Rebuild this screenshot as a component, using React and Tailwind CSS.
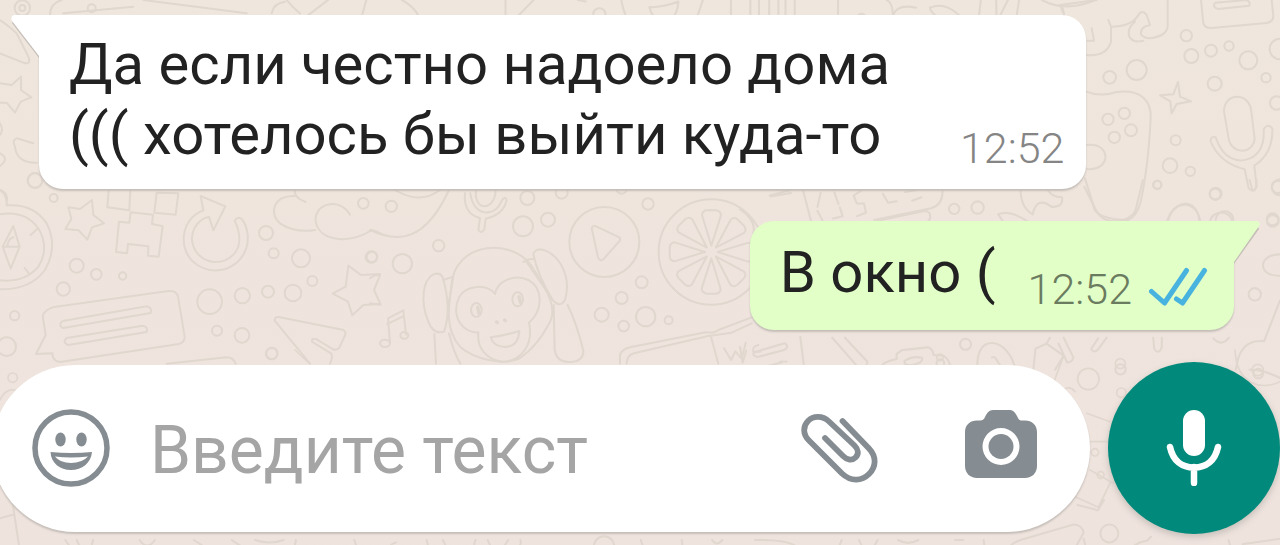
import React from "react";

function Dots({ items }) {
  return items.map(([x, y, r]) => <circle key={`${x}-${y}`} cx={x} cy={y} r={r} />);
}

function Wallpaper() {
  return (
    <svg
      aria-hidden="true"
      viewBox="0 0 1280 545"
      preserveAspectRatio="xMidYMid slice"
      className="pointer-events-none absolute inset-0 size-full fill-none stroke-[#e0d7cf] [stroke-linecap:round] [stroke-linejoin:round]"
    >
      {/* left: compass, puzzle, reload arrow, speech card */}
      <g transform="translate(0 180) scale(.33333)" strokeWidth="6">
        <path d="M0 30Q22 45 20 76Q100 70 140 130Q175 200 135 270Q90 330 0 328M0 103Q75 90 115 145Q150 205 115 260Q75 308 0 301M40 138L59 200L32 266L8 200ZM8 200H59M22 198Q25 175 40 172M92 165L112 146M74 264L88 282" />
        <path d="M205 82L240 87L276 60L280 105L312 130L276 142L262 179L236 151L196 147L214 117Z" />
        <path d="M326 30L322 82L388 91L391 30M470 38L463 98L527 104L535 40ZM392 97L459 104L456 132L488 139L476 230L444 227L445 199L384 192L381 220L348 216L357 125L388 128Z" />
        <path d="M610 91C540 116 530 215 592 255C665 300 750 245 743 165Q740 135 725 117Q713 108 704 122C735 190 710 225 675 241C610 265 555 200 584 143Q600 115 627 110L640 151L676 79L602 48Z" />
        <path d="M885 30Q880 52 917 66M885 48C820 45 805 100 840 130Q885 160 946 150M1050 104C1020 50 940 70 947 125C960 190 1060 190 1115 150Q1130 152 1145 162" />
        <path d="M140 392Q150 382 168 380L500 334Q529 328 534 350L554 470Q554 487 537 492L180 546Q158 545 157 520L108 522L137 465L129 414Q127 400 140 392ZM188 423L440 379Q457 382 452 399L190 444Q172 437 188 423ZM200 474L428 437Q445 440 440 456L205 495Q185 488 200 474Z" />
        <path d="M500 551L680 532Q700 532 707 551M930 551L824 422Q824 410 836 411L1028 449Q1040 455 1035 466L1018 503Q1010 513 998 507L950 478Q932 473 937 486L993 520Q1000 530 990 551" />
        <path d="M1045 257L1083 285L1140 282M1045 257L1037 320L998 341L1044 365L1057 406L1090 375L1140 372" />
        <Dots items={[[105,2,22],[161,54,12],[230,257,21],[289,283,16],[368,288,11],[190,327,20],[44,407,14],[20,500,28],[798,159,21],[821,220,15],[903,235,27],[937,303,15],[879,339,25],[804,335,18],[727,347,23],[629,365,37],[651,452,15],[726,466,22],[815,521,17],[1090,70,16],[1114,231,17]]} />
      </g>

      {/* centre: monkey, microphone, play, citrus slice, book */}
      <g transform="translate(370 180) scale(.33333)" strokeWidth="6">
        <path d="M0 150C85 190 165 185 237 30M75 30Q150 75 210 30M0 295Q15 282 30 286L12 330L32 374L0 370" />
        <path d="M285 40C280 85 302 108 330 114L325 150Q334 163 343 148L347 116Q400 105 410 60Q405 45 395 62C375 115 310 110 301 40M318 30C310 95 375 95 377 30" />
        <path d="M60 488L54 415L100 391L108 464M52 432L98 410" />
        <ellipse cx="45" cy="490" rx="15" ry="11" /><ellipse cx="103" cy="466" rx="12" ry="10" />
        <path d="M244 320C250 180 440 170 492 270C535 335 565 390 535 435Q500 500 450 534C400 560 310 535 270 500C225 450 235 380 244 320Z" />
        <path d="M375 342C350 310 290 315 268 350C240 410 280 460 325 457C320 505 350 540 400 546C460 540 490 490 477 428C520 390 520 325 475 300C430 280 380 305 375 342Z" />
        <path d="M362 472Q410 465 448 453Q445 500 405 501Q370 500 362 472Z" />
        <path d="M218 292C235 350 238 410 222 455Q190 465 175 425C150 365 158 300 190 283Q211 276 218 292ZM219 300L250 290L233 390M193 462L198 551M237 460Q250 515 271 551" />
        <path d="M490 223Q495 205 518 209C570 225 605 290 585 360Q570 385 548 360C523 320 500 270 490 223ZM460 246Q473 235 492 237M470 246L548 360M551 375L554 510Q560 548 603 546Q641 543 640 512Q620 430 593 375" />
        <ellipse cx="319" cy="390" rx="16" ry="21" /><ellipse cx="443" cy="358" rx="16" ry="21" />
        <path d="M323 382L327 400M447 350L451 367M380 426L382 428M404 420L406 422" strokeWidth="10" />
        <circle cx="703" cy="186" r="105" /><path d="M665 144Q668 135 680 140L748 172Q754 180 745 187L700 238Q690 245 684 232Z" />
        <circle cx="1024" cy="216" r="158" />
        {[0, 45, 90, 135, 180, 225, 270, 315].map((a) => (
          <path key={a} transform={`rotate(${a} 1024 216)`} d="M1024 197L996 105Q998 91 1012 91H1038Q1052 93 1053 106Z" />
        ))}
        <path d="M750 551V525Q755 508 780 502L1007 457Q1035 460 1045 450L1145 412M770 551Q770 526 792 520L1015 468L1085 458L1145 430M1023 470L1045 551M1062 505L1083 540L1096 514L1115 536L1127 488M1165 495Q1145 500 1150 515H1170" />
        <Dots items={[[64,79,17],[97,251,29],[206,197,17],[6,231,16],[472,54,21],[575,38,18],[459,139,30],[534,119,21],[834,72,17],[815,307,18],[755,354,18],[695,404,21],[761,438,16],[827,410,29],[896,421,12],[755,25,16]]} />
      </g>

      {/* right of centre: clock, camera, paper shapes */}
      <g transform="translate(740 180) scale(.34435)" strokeWidth="6">
        <path d="M86 45L145 30M90 48L148 38M183 30L207 122M588 30Q590 72 555 82L390 116M400 118L535 90Q555 90 552 112L545 122M0 85Q50 120 38 155M234 38L225 78M225 90L240 118M274 36L286 70M290 80L298 105L270 112M350 32L330 45L339 68L360 68L366 95L340 105M415 40L430 66L455 62M480 35L510 30M500 60L527 50" />
        <path d="M815 30Q815 80 850 100Q862 45 905 78Q940 80 935 50Q905 50 895 30M750 100Q780 85 835 120M750 100L765 122M1000 20L1035 90C1060 135 1130 125 1148 90L1170 0M1240 122C1255 60 1325 50 1337 122M1480 0L1488 30Q1500 35 1500 0M1365 122C1370 85 1425 85 1430 122M1568 216C1505 215 1500 280 1568 278M1568 350L1522 468Q1450 460 1440 551" />
        <path d="M175 455L187 551M0 485L8 530L18 495M42 500L130 474Q145 484 128 494L52 514Q32 510 42 500ZM70 543L120 530M268 458L344 545Q365 555 370 528L305 458M410 551Q405 530 455 520V505L470 494L545 486Q560 490 562 508L590 510Q610 520 612 551M478 525Q500 510 528 516Q535 530 500 537Q475 540 478 525Z" />
        <path d="M690 551C680 440 780 455 800 551M732 515Q740 510 750 530L765 551M852 551L858 490L890 475L940 510L915 551M890 475L900 458M925 475L950 530Q965 530 968 515L940 458M1040 460L1020 490Q1025 505 1040 492L1065 458M1200 458L1203 490Q1215 510 1225 485V458M1375 460Q1400 485 1420 458M1480 551Q1520 550 1568 575" />
        <Dots items={[[622,84,15],[690,80,18],[1212,14,12],[1380,41,16],[1547,119,17],[1495,332,18],[655,477,16],[1105,550,15],[1562,20,18],[582,532,11],[1505,562,14]]} />
      </g>

      {/* top right: phone card, controller, microphone */}
      <g transform="translate(1060 0) scale(.33333)" strokeWidth="6">
        <path d="M0 15L110 0M145 60L153 80Q210 80 232 50Q245 25 260 45L270 75Q240 80 243 103Q260 125 305 105Q325 95 323 70V0M225 65Q200 85 208 110Q220 130 250 122M153 80V125Q140 170 80 165M95 85L102 122H82M0 15L12 42" />
        <path d="M423 0L430 70Q435 85 455 84L620 69Q640 65 640 48L635 0M466 8L560 0Q572 5 568 17L475 27Q455 22 466 8Z" />
        <path d="M80 275Q120 292 170 276C240 268 275 300 272 355Q265 500 242 605Q230 650 205 660Q130 660 105 632L75 535M80 435C155 425 155 515 80 507" />
        <path d="M300 286L340 283L354 246L360 290L393 304L350 312L335 340L331 304Z" />
        <path d="M492 335C492 275 570 275 574 335L584 415C580 465 510 465 505 410ZM452 425Q450 408 467 412C490 480 535 490 570 475Q615 455 611 388Q623 368 637 385Q640 460 583 497L590 560Q580 580 566 565L554 508Q480 490 452 425Z" />
        <path d="M325 660C340 600 410 590 418 660M467 660C470 625 520 625 520 660" />
        <Dots items={[[379,107,17],[453,152,18],[507,138,14],[394,168,21],[565,181,27],[660,147,31],[618,233,14],[464,251,21],[650,309,20],[230,210,30],[149,232,19],[193,340,17],[144,358,17],[213,391,18],[163,412,17],[347,421,15],[330,497,22],[391,514,14],[292,554,12],[467,581,18],[660,562,24],[638,658,18]]} />
      </g>

      {/* left edge */}
      <g transform="scale(.33333)" strokeWidth="6">
        <path d="M0 60Q30 80 50 100L85 170Q95 195 70 188L0 160M0 250L35 255L63 230V270L94 292L62 305L45 338L20 308H0M150 45Q150 10 185 0M190 40L400 20M430 0L740 40M815 40Q820 10 855 5M860 0Q880 25 900 40M100 430L50 415Q35 420 45 440Q50 490 110 488M0 370Q12 390 0 405M0 460Q30 475 0 498M0 570Q20 575 22 600" />
        <Dots items={[[67,24,23],[67,24,9],[105,541,22],[275,25,12]]} />
      </g>

      {/* strip above the first message */}
      <g transform="translate(300 0) scale(.51)" strokeWidth="4">
        <path d="M0 42L55 0M118 44L130 0M200 0Q235 20 235 45M403 0V44M415 44L458 0M545 0L560 3M630 0Q635 30 648 44M775 44L790 0M685 14Q710 15 742 3Q740 40 710 42Q690 35 685 14ZM845 0V44M883 0V30Q890 45 900 30V0M920 0V30Q928 45 938 30V0M952 0V30Q962 45 970 30V0M1055 0V44M1150 0Q1165 5 1162 44M1162 44Q1160 5 1208 15M1235 15Q1270 0 1305 44Q1240 40 1235 15M1335 0L1330 44M1365 0L1366 44L1388 0M1410 0L1403 44M1455 0Q1500 25 1560 0M1495 15L1502 44" />
        <Dots items={[[333,42,9],[532,42,9],[587,28,12],[1101,36,9],[72,44,8]]} />
      </g>

      {/* strips around and below the composer */}
      <g transform="translate(0 500) scale(.40816)" strokeWidth="5">
        <path d="M0 45L35 35L48 120L0 130M35 35L30 0M48 120L150 134M160 98L185 134M188 98Q215 160 228 98M342 98Q360 125 380 98M475 98L530 134M568 98Q610 130 660 134M725 98L718 134M625 98Q660 110 695 98M868 98L880 134M970 104Q945 110 960 134M1045 98L1055 134M1085 98L1103 134M1165 98Q1155 120 1180 118V134M1195 98Q1215 150 1245 98M1260 134V115Q1280 115 1275 98M1570 98Q1585 150 1630 134Q1680 130 1670 98M1745 98Q1755 115 1770 98M1850 98Q1960 95 1965 134M2040 134Q2060 110 2062 98M2105 98Q2125 150 2150 98M2200 98Q2225 112 2250 98M2340 98L2350 98L2360 98M2410 98L2415 134" />
        <path d="M2470 134Q2465 110 2500 98L2630 60Q2650 60 2655 80L2625 134M2655 95L2665 134M2640 12L2690 25L2705 0M2760 134Q2775 105 2810 100L2820 90M3010 98Q3020 134 3020 134M3040 134L3045 108L3136 95" />
        <Dots items={[[305,127,11],[423,127,11],[1480,114,25],[1418,130,10],[1810,130,10],[2718,82,22]]} />
      </g>
      <g transform="translate(780 350) scale(.33333)" strokeWidth="5">
        <path d="M920 190L990 215M930 275H985M930 360L1000 400M885 440L955 472L990 400M820 100L850 20M1365 0C1370 110 1450 120 1500 95M0 35H20M850 120Q870 105 885 125" />
        <Dots items={[[925,87,32],[1021,41,15],[1024,128,14],[945,307,11],[962,375,10],[1433,60,17],[480,22,10]]} />
      </g>
      <g transform="translate(0 350) scale(.33333)" strokeWidth="5">
        <Dots items={[[38,83,14],[816,10,17]]} />
        <path d="M0 150Q15 115 45 120M885 0L930 42" />
      </g>
    </svg>
  );
}

function SmileIcon() {
  return (
    <svg aria-hidden="true" viewBox="0 0 78 78" className="size-[78px] fill-[#868d92]">
      <circle cx="39" cy="39" r="36" fill="none" className="stroke-[#868d92]" strokeWidth="5.5" />
      <ellipse cx="28.5" cy="30.5" rx="5.2" ry="7" />
      <ellipse cx="49.5" cy="30.5" rx="5.2" ry="7" />
      <path fillRule="evenodd" d="M18.5 43Q39 45 60 43C59 54 50 61 39 61S19 54 18.5 43ZM23 47.500Q28 54 39 54T56 47.500Q39 49.500 23 47.500Z" />
    </svg>
  );
}

function ClipIcon() {
  return (
    <svg aria-hidden="true" viewBox="0 0 78 70" className="h-[70px] w-[78px] fill-none stroke-[#868d92]" strokeWidth="5.8" strokeLinecap="round" strokeLinejoin="round">
      <path d="M24 25L42 43C46 47 51 48 54.500 44.500S57.500 36.500 53.500 32.500L28 8.500C21 2 12 3 7 8S1.500 21 8 27.500L41 60.500C50 69 61 68 68 61S76 44 68 35.500L41.500 8" />
    </svg>
  );
}

function CameraIcon() {
  return (
    <svg aria-hidden="true" viewBox="0 0 72 68" className="h-[68px] w-[72px] fill-[#868d92]">
      <path fillRule="evenodd" d="M28 0H45C49 0 51 4 53 8C54 10 55 10.500 57 10.500H60C67 10.500 72 15 72 22V56C72 63 67 68 60 68H12C5 68 0 63 0 56V22C0 15 5 10.500 12 10.500H15C18 10.500 19 9 20 7C22 3 24 0 28 0ZM36 18A18.500 18.500 0 1 0 36 55A18.500 18.500 0 1 0 36 18Z" />
      <circle cx="36" cy="36.5" r="12.5" />
    </svg>
  );
}

function MicIcon() {
  return (
    <svg aria-hidden="true" viewBox="0 0 56 76" className="h-[76px] w-[56px] fill-white">
      <rect x="17" y="0" width="22" height="46" rx="11" />
      <path d="M4 37C7 51 16 57.500 28 57.500S49 51 52 37M28 57V73" className="fill-none stroke-white" strokeWidth="6.5" strokeLinecap="round" />
    </svg>
  );
}

function ReadIcon() {
  return (
    <svg role="img" aria-label="Прочитано" viewBox="0 0 60 40" className="h-[40px] w-[60px] fill-none stroke-[#48b3df]" strokeWidth="5" strokeLinecap="round" strokeLinejoin="round">
      <path d="M3.500 24.500L16.500 36L38.500 3.500M28.500 32L34.500 36L56.500 3.500" />
    </svg>
  );
}

export default function App() {
  return (
    <main className="relative flex min-h-screen flex-col overflow-hidden bg-linear-to-b from-[#efe6dd] to-[#efe3de] font-[Roboto,sans-serif]">
      <Wallpaper />

      <section aria-label="Сообщения" className="relative flex flex-1 flex-col gap-8 pt-[15px] pr-[46px] pb-[31px] pl-[39px] text-[#222222]">
        <article className="relative flex items-end gap-[70px] self-start rounded-r-3xl rounded-bl-3xl bg-white pt-[14px] pr-[22px] pb-5 pl-[30px] shadow-[0_2px_2px_#c5beb8]">
          <svg aria-hidden="true" viewBox="0 0 29 43" className="absolute top-0 -left-7 h-[43px] w-[29px]">
            <path d="M3 4L28 40V43L1 8Z" className="fill-[#c5beb8]" />
            <path d="M29 0H3Q-1 1 1 6L28 41H29Z" className="fill-white" />
          </svg>
          <p className="text-[58px] leading-[70px] whitespace-pre-line">{"Да если честно надоело дома\n((( хотелось бы выйти куда-то"}</p>
          <time className="-mb-1 text-[43px] leading-[50px] font-light text-[#858585]">12:52</time>
        </article>

        <article className="relative flex items-end gap-8 self-end rounded-l-3xl rounded-br-3xl bg-[#e1ffc7] pt-[14px] pr-[26px] pb-5 pl-[30px] shadow-[0_2px_2px_#c5beb8]">
          <svg aria-hidden="true" viewBox="0 0 27 43" className="absolute top-0 -right-[26px] h-[43px] w-[27px]">
            <path d="M24 4L1 40V43L26 8Z" className="fill-[#c5beb8]" />
            <path d="M0 0H24Q28 1 26 5L1 41H0Z" className="fill-[#e1ffc7]" />
          </svg>
          <p className="text-[58px] leading-[75px]">В окно (</p>
          <div className="flex items-center gap-4">
            <time className="-mb-1 text-[43px] leading-[50px] font-light text-[#6b7b60]">12:52</time>
            <ReadIcon />
          </div>
        </article>
      </section>

      <form className="relative -ml-2 flex items-center gap-[18px] pb-[11px]" onSubmit={(e) => e.preventDefault()}>
        <div className="flex h-[167px] min-w-0 flex-1 items-center rounded-full bg-white pr-[53px] pl-10 shadow-[0_2px_2px_#c5beb8]">
          <button type="button" aria-label="Эмодзи" className="shrink-0"><SmileIcon /></button>
          <input
            type="text"
            aria-label="Введите текст"
            placeholder="Введите текст"
            className="ml-10 h-20 min-w-0 flex-1 bg-transparent pt-1 text-[66px] text-[#222222] outline-none placeholder:text-[#a5a5a5]"
          />
          <button type="button" aria-label="Прикрепить" className="shrink-0"><ClipIcon /></button>
          <button type="button" aria-label="Камера" className="ml-[86px] shrink-0 pb-2"><CameraIcon /></button>
        </div>
        <button type="button" aria-label="Голосовое сообщение" className="flex size-[172px] shrink-0 items-center justify-center rounded-full bg-[#018a7b] shadow-[0_3px_7px_#c5beb8]">
          <MicIcon />
        </button>
      </form>
    </main>
  );
}
